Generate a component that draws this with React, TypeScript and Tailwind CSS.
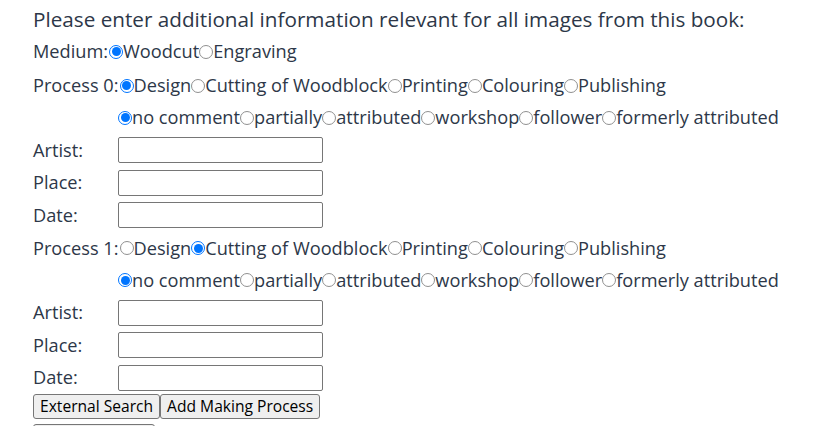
const PROCESSES = ["Design", "Cutting of Woodblock", "Printing", "Colouring", "Publishing"];
const COMMENTS = ["no comment", "partially", "attributed", "workshop", "follower", "formerly attributed"];

function Radio({ label, checked }: { label: string; checked?: boolean }) {
  return (
    <span className="inline-flex items-center">
      {checked ? (
        <span className="flex w-[14px] h-[14px] shrink-0 rounded-full border border-[#0075ff] bg-white p-[1.5px]">
          <span className="block w-full h-full rounded-full bg-[#0075ff]" />
        </span>
      ) : (
        <span className="block w-[14px] h-[14px] shrink-0 rounded-full border border-[#909090] bg-white" />
      )}
      <span>{label}</span>
    </span>
  );
}

function Field({ label }: { label: string }) {
  return (
    <div className="flex items-center h-[32.5px]">
      <span className="w-[85px]">{label}</span>
      <input type="text" className="w-[205px] h-[26px] border border-[#767676] rounded-[2px] bg-white" />
    </div>
  );
}

function ProcessBlock({ index, selected }: { index: number; selected: number }) {
  return (
    <div>
      <div className="flex items-center h-[32.5px] pt-[1px]">
        <span className="pr-[1px]">Process {index}:</span>
        {PROCESSES.map((p, i) => (
          <Radio key={p} label={p} checked={i === selected} />
        ))}
      </div>
      <div className="flex items-center h-[32.5px] pl-[85px]">
        {COMMENTS.map((c, i) => (
          <Radio key={c} label={c} checked={i === 0} />
        ))}
      </div>
      <Field label="Artist:" />
      <Field label="Place:" />
      <Field label="Date:" />
    </div>
  );
}

export default function App() {
  return (
    <div className="bg-white w-[834px] h-[426px] overflow-hidden pl-[33px] pt-[4px] text-[#2d3748] text-[18.2px] font-['Open_Sans',sans-serif]">
      <h2 className="text-[20.7px] h-[31px] leading-[31px]">
        Please enter additional information relevant for all images from this book:
      </h2>
      <div className="flex items-center h-[34px]">
        <span className="pr-[1px]">Medium:</span>
        <Radio label="Woodcut" checked />
        <Radio label="Engraving" />
      </div>
      <ProcessBlock index={0} selected={0} />
      <ProcessBlock index={1} selected={1} />
      <div className="flex">
        <button className="h-[25px] px-[6px] bg-[#efefef] border border-[#767676] rounded-[3px] text-[15.6px] text-black">External Search</button>
        <button className="h-[25px] px-[6px] bg-[#efefef] border border-[#767676] rounded-[3px] text-[15.6px] text-black">Add Making Process</button>
      </div>
      <div className="pt-[3px]">
        <button className="h-[25px] w-[122px] px-[6px] bg-[#efefef] border border-[#767676] rounded-[3px] text-[15.6px] text-black">&nbsp;</button>
      </div>
    </div>
  );
}
